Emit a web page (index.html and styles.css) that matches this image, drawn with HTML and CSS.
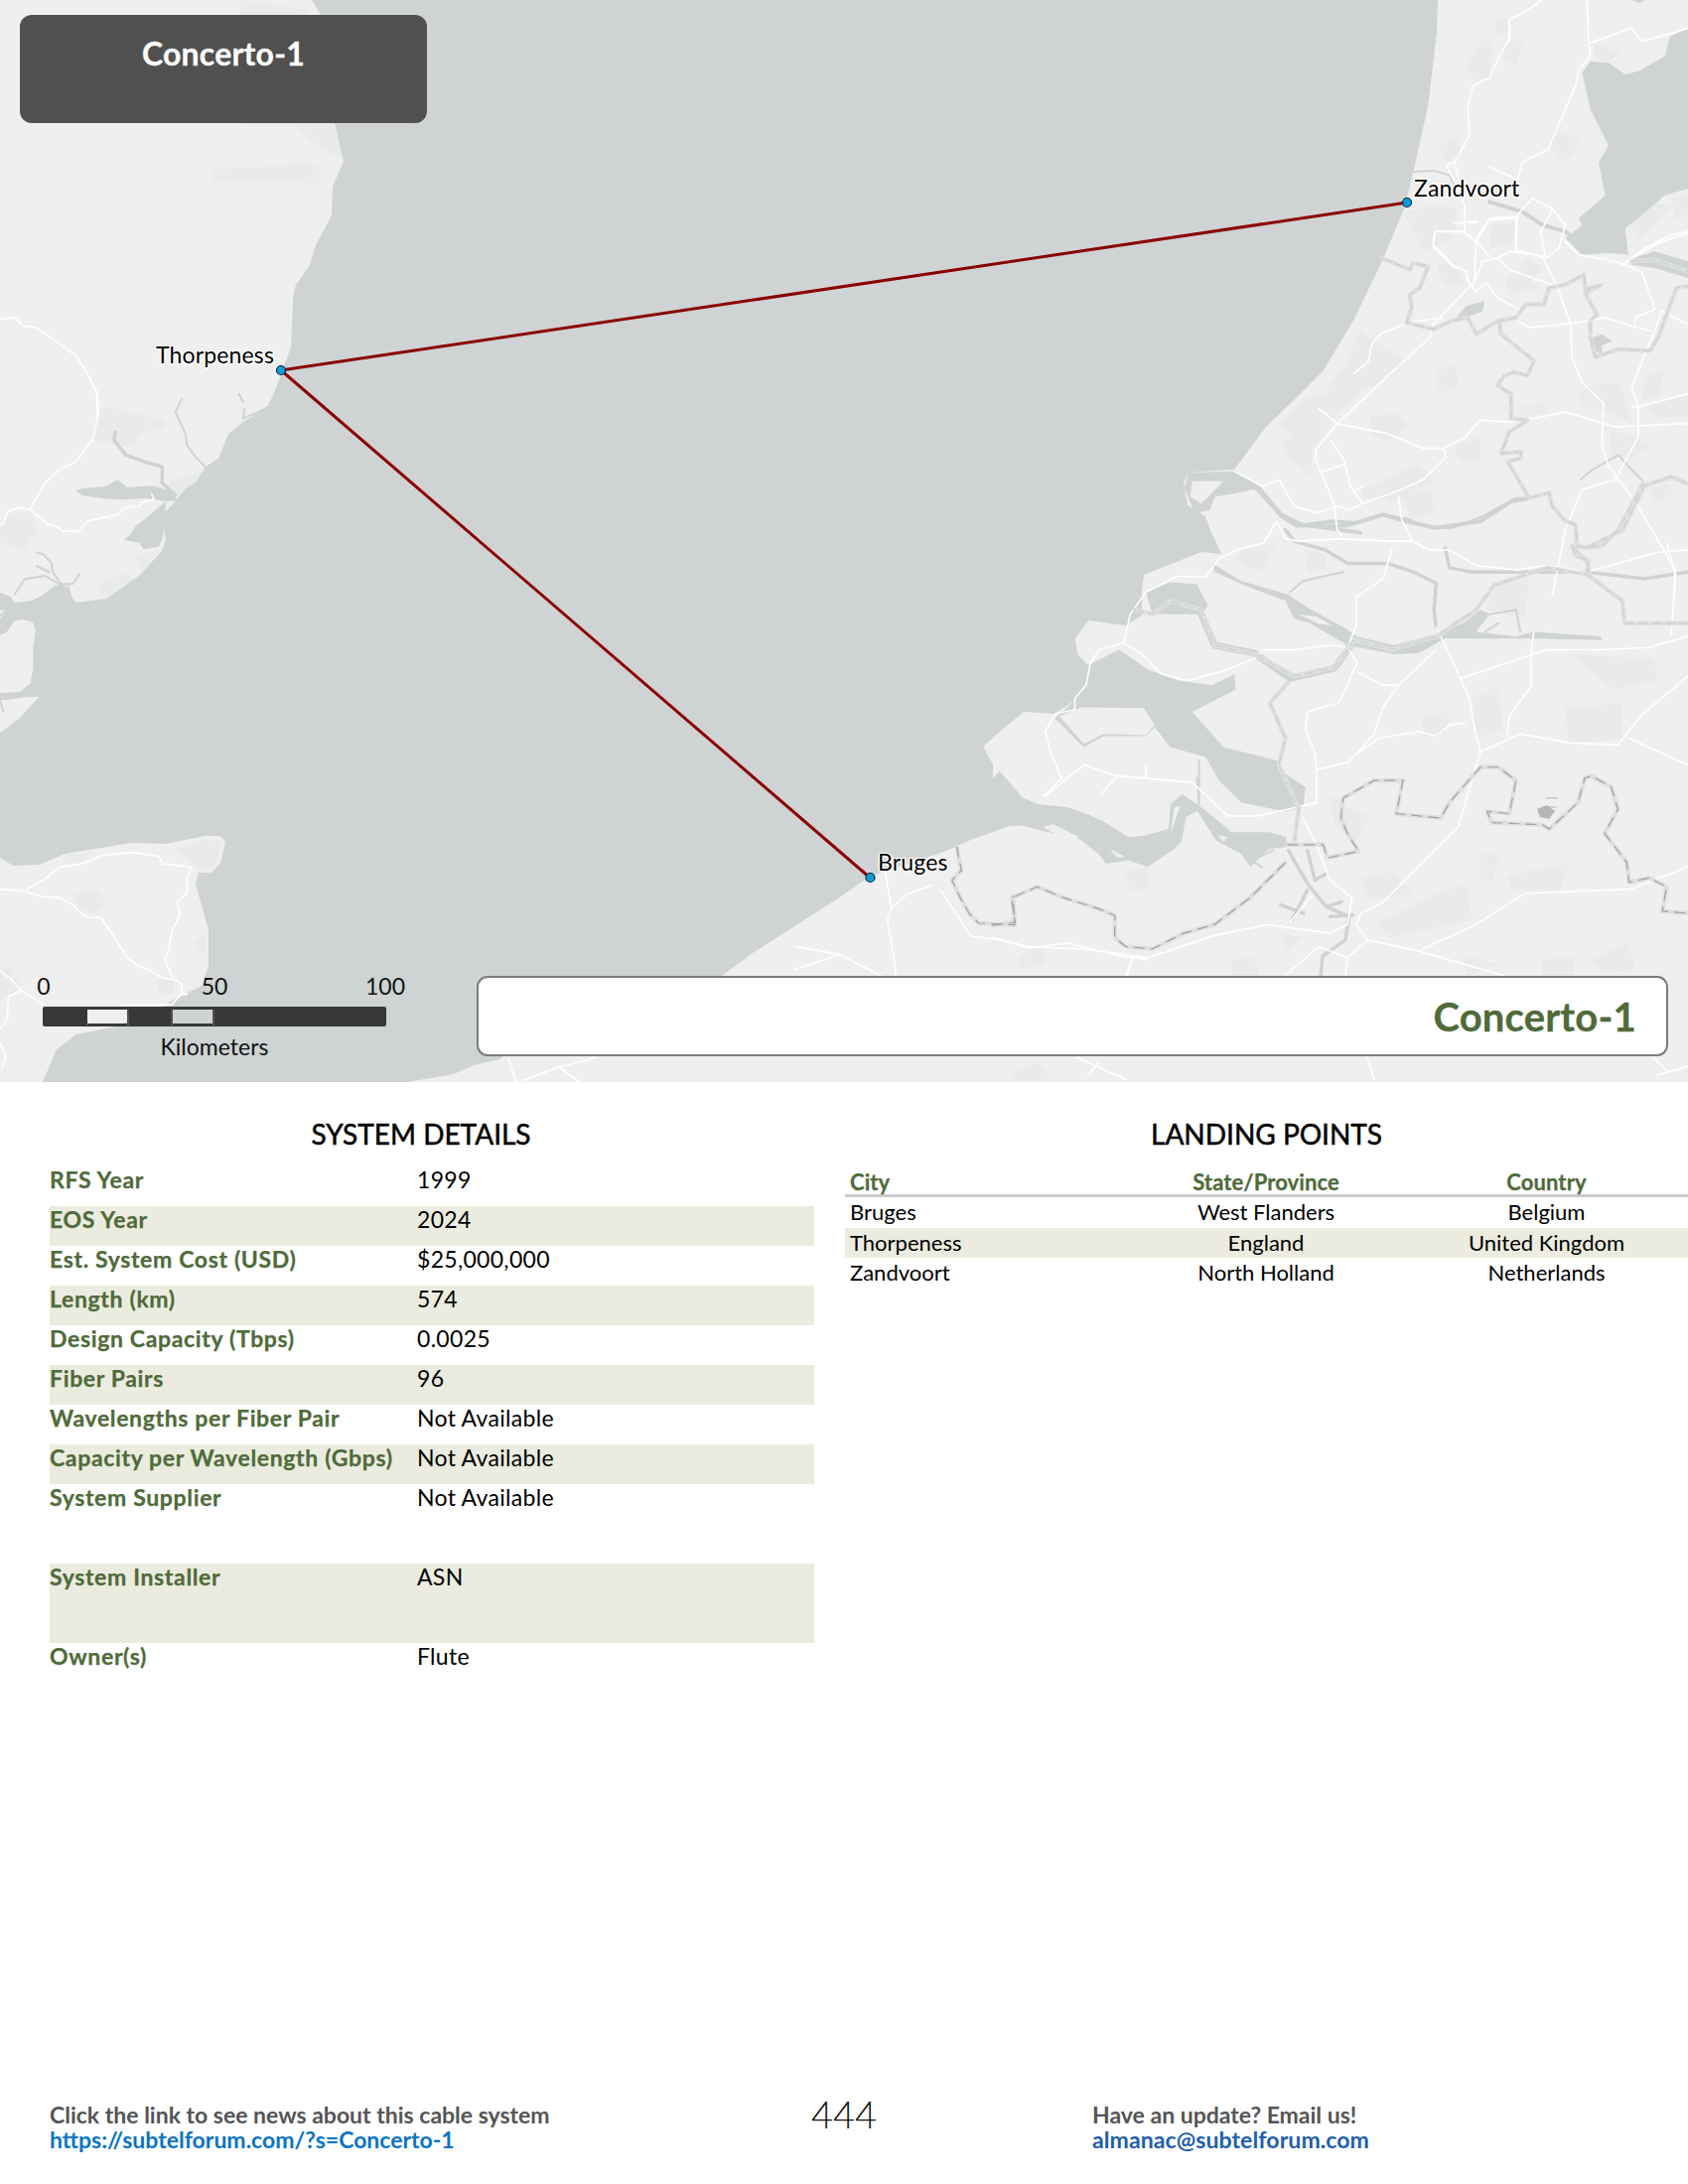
FILE: index.html
```html
<!DOCTYPE html>
<html lang="en">
<head>
<meta charset="utf-8">
<title>Concerto-1</title>
<link rel="stylesheet" href="styles.css">
</head>
<body>
<div class="page">
  <section class="map">
    <svg class="map-art" viewBox="0 0 1700 1090" width="1700" height="1090" aria-hidden="true">
      <defs>
        <g id="borders-major">
          <g transform="translate(1000 400) scale(.4464)">
            <path d="M0,1192 L50,1185 L42,1130 L100,1105 L160,1130 L240,1155 L275,1170 L275,1220 L300,1240 L360,1245 L430,1210 L500,1190 L580,1130 L660,1050"/>
            <path d="M665,1010 L745,1010 L755,1040 L825,1025 L800,985 L785,950 L790,905 L860,865 L925,865 L910,940 L1010,950 L1030,915 L1060,880 L1100,835 L1140,835 L1180,865 L1165,940 L1115,935 L1125,960 L1240,965 L1255,975 L1320,915 L1335,860 L1350,855 L1395,880 L1410,930 L1380,985 L1430,1050 L1435,1095 L1480,1085 L1520,1105 L1510,1160 L1568,1165"/>
          </g>
          <g transform="translate(800 780) scale(.3827 .3333)">
            <path d="M428,220 L432,250 L440,290 L415,320 L435,370 L460,420 L485,450 L580,455 L575,370"/>
          </g>
        </g>
        <g id="borders-minor">
          <g transform="translate(1000 400) scale(.4464)">
            <path d="M320,480 L360,490 L400,460 L470,480 L500,560 L590,580 L680,630 L770,610 L815,548 L900,570 L1000,540 L1090,480 L1130,425 L1250,385 L1340,400 L1420,460 L1425,510 L1568,510"/>
            <path d="M665,645 L625,690 L660,770 L645,830 L690,930 L680,1000"/>
            <path d="M1340,340 L1420,300 L1470,200 L1530,180 L1568,195"/>
            <path d="M1310,340 L1340,370 L1345,395"/>
          </g>
          <g transform="translate(1200 200) scale(.3333)">
            <path d="M575,180 L660,215 L670,195 L715,205 L690,270 L660,290 L665,330 L650,375 L730,395 L785,370 L835,360 L860,410 L925,370 L980,360 L1010,320 L1065,320 L1080,270 L1130,260 L1185,230 L1190,275 L1235,262 L1190,285 L1205,315 L1225,350 L1205,370 L1205,415 L1220,480 L1290,455 L1385,460 L1410,420 L1465,270 L1500,265"/>
            <path d="M930,375 L935,410 L1035,490 L1015,535 L975,525 L945,535 L925,565 L965,590 L965,665 L1015,670 L960,705 L935,770 L995,765 L995,785 L955,795 L1020,905 L1080,890 L1090,930 L1130,975 L1160,985 L1165,1050 L1195,1055 L1240,1050 L1290,1000 L1365,860"/>
            <path d="M1150,1050 L1160,1080 L1200,1095 L1195,1130"/>
            <path d="M1330,190 L1400,185 L1500,220"/>
          </g>
        </g>
      </defs>

      <rect class="land" width="1700" height="1090"/>

      <g class="urban">
        <g transform="translate(0 0) scale(.3827 .3333)">
          <path d="M560,510 L700,505 L800,490 L840,500 L840,555 L700,548 L560,548Z"/>
          <path d="M630,0 L700,10 L810,30 L860,140 L900,480 L820,430 L780,380 L640,380 L730,300 L640,200Z"/>
        </g>
        <g transform="translate(0 380) scale(.3333)">
          <path d="M300,95 L340,90 L410,110 L500,130 L500,150 L425,170 L400,210 L320,200 L280,190Z"/>
          <path d="M0,445 L30,410 L90,405 L115,460 L70,525 L0,500Z"/>
          <path d="M290,630 L370,590 L410,610 L320,665Z"/>
          <path d="M505,315 L610,285 L590,318 L540,365Z"/>
          <path d="M400,545 L480,520 L430,585Z"/>
        </g>
        <g transform="translate(0 780) scale(.3333)">
          <path d="M220,360 L290,350 L320,380 L290,420 L240,410Z"/>
          <path d="M470,620 L520,610 L530,660 L480,670Z"/>
          <path d="M590,500 L625,485 L625,530 L600,545Z"/>
          <path d="M520,230 L620,195 L670,205 L650,280 L600,290 L560,250Z"/>
          <path d="M200,240 L270,235 L260,262 L190,270Z"/>
          <path d="M0,600 L30,575 L60,640 L40,670 L0,680Z"/>
        </g>
        <g transform="translate(1300 0) scale(.3333)">
          <path d="M530,200 L580,120 L610,130 L600,235 L550,240Z"/>
          <path d="M640,180 L650,130 L710,115 L680,195Z"/>
          <path d="M620,60 L650,50 L660,100 L620,110Z"/>
          <path d="M780,440 L810,400 L880,420 L830,490Z"/>
          <path d="M915,130 L1000,160 L950,190 L920,180Z"/>
          <path d="M340,640 L480,620 L490,720 L400,760Z"/>
          <path d="M450,440 L510,410 L510,470 L465,490Z"/>
          <path d="M1020,680 L1100,610 L1150,620 L1060,720Z"/>
          <path d="M440,800 L500,790 L530,860 L460,860Z"/>
          <path d="M650,850 L720,780 L760,810 L700,880Z"/>
          <path d="M600,680 L690,670 L670,740 L600,750Z"/>
          <path d="M1150,600 L1200,590 L1200,650 L1160,660Z"/>
        </g>
        <g transform="translate(1200 200) scale(.3333)">
          <path d="M270,680 L330,610 L400,590 L460,510 L510,400 L550,430 L640,480 L620,530 L520,580 L440,650 L380,740 L330,770Z"/>
          <path d="M740,520 L800,505 L805,570 L740,590Z"/>
          <path d="M540,670 L620,645 L655,690 L590,735 L540,710Z"/>
          <path d="M790,760 L850,735 L880,780 L820,800Z"/>
          <path d="M520,870 L680,830 L705,860 L520,910Z"/>
          <path d="M640,900 L720,880 L740,950 L660,970Z"/>
          <path d="M990,630 L1060,615 L1070,650 L1000,660Z"/>
          <path d="M1160,590 L1230,560 L1300,560 L1330,680 L1250,640 L1180,630Z"/>
          <path d="M1260,700 L1320,710 L1390,750 L1320,790 L1270,770Z"/>
          <path d="M1370,620 L1500,590 L1500,660 L1400,660Z"/>
          <path d="M750,200 L800,190 L800,240 L770,260Z"/>
          <path d="M950,250 L1020,240 L1050,270 L960,290Z"/>
          <path d="M1380,880 L1440,860 L1460,890 L1400,920Z"/>
          <path d="M1370,540 L1430,520 L1410,600 L1360,610Z"/>
          <path d="M340,1060 L400,1070 L410,1120 L350,1130Z"/>
          <path d="M150,1090 L210,1070 L220,1130 L160,1110Z"/>
          <path d="M700,20 L800,30 L800,100 L720,130 L660,90Z"/>
        </g>
        <g transform="translate(1000 400) scale(.4464)">
          <path d="M850,45 L900,35 L930,70 L870,80Z"/>
          <path d="M1040,110 L1100,90 L1100,140 L1060,150Z"/>
          <path d="M830,210 L960,150 L1000,190 L900,240Z"/>
          <path d="M1080,680 L1140,650 L1150,750 L1090,770Z"/>
          <path d="M1290,700 L1420,690 L1420,770 L1300,780Z"/>
          <path d="M1300,580 L1490,590 L1500,640 L1400,660Z"/>
          <path d="M970,720 L1030,710 L1020,760 L970,765Z"/>
          <path d="M830,1085 L900,1070 L950,1120 L850,1135Z"/>
          <path d="M1000,1120 L1070,1100 L1080,1180 L900,1220 L860,1190Z"/>
          <path d="M1160,1080 L1300,1050 L1280,1110 L1170,1110Z"/>
          <path d="M1100,1030 L1140,1030 L1130,1090 L1100,1090Z"/>
          <path d="M60,1260 L110,1240 L120,1280 L60,1290Z"/>
          <path d="M300,1070 L350,1060 L350,1110 L310,1115Z"/>
          <path d="M540,1270 L590,1265 L600,1305 L540,1305Z"/>
          <path d="M650,1210 L700,1220 L660,1250Z"/>
          <path d="M1240,1270 L1310,1260 L1310,1305 L1240,1305Z"/>
          <path d="M1060,1260 L1140,1280 L1070,1305Z"/>
          <path d="M1350,1270 L1430,1230 L1450,1290 L1380,1300Z"/>
          <path d="M760,900 L850,950 L820,1000 L770,970Z"/>
          <path d="M40,1530 L100,1500 L130,1540 L50,1545Z"/>
          <path d="M650,100 L720,90 L720,180 L660,130Z"/>
          <path d="M560,340 L640,330 L610,395 L550,370Z"/>
          <path d="M1140,420 L1210,410 L1200,500 L1110,480Z"/>
          <path d="M350,630 L480,660 L430,680Z"/>
        </g>
      </g>

      <path class="water" d="M314,0 L323,15 L337,124 L346,163 L335,188 L334,217 L318,247 L312,267 L298,287 L295,300 L293,350 L283,377 L277,393 L270,410 L245,425 L230,437 L220,462 L207,470 L198,485 L187,492 L178,503 L163,520 L167,543 L163,555 L140,580 L107,603 L77,607 L73,603 L68,592 L62,588 L55,590 L42,600 L32,605 L15,607 L10,602 L0,597 L0,864 L13,872 L40,871 L65,860 L133,849 L167,850 L207,842 L222,842 L227,848 L222,870 L213,879 L200,879 L197,890 L210,937 L210,973 L203,993 L183,1003 L160,1015 L117,1034 L77,1042 L57,1057 L43,1090 L410,1090 L457,1082 L477,1073 L503,1067 L540,1040 L727,983 L758,960 L800,933 L844,905 L876,883 L953,857 L980,845 L1018,832 L1000,838 L1000,770 L990,752 L1000,743 L1031,717 L1062,719 L1085,704 L1096,670 L1085,659 L1083,643 L1096,625 L1134,630 L1150,620 L1150,594 L1152,579 L1210,556 L1230,558 L1219,534 L1214,520 L1196,509 L1192,487 L1196,476 L1243,473 L1275,430 L1303,403 L1333,373 L1363,323 L1392,263 L1415,208 L1427,157 L1438,107 L1447,33 L1448,0Z"/>

      <!-- England: islands and estuaries -->
      <g transform="translate(0 380) scale(.3333)">
        <path class="land" d="M0,780 L20,770 L45,735 L70,732 L100,740 L107,765 L100,820 L100,880 L92,925 L60,950 L0,955Z"/>
        <path class="land" d="M0,1075 L20,1060 L60,1030 L118,965 L65,968 L20,975 L0,975Z"/>
        <path class="land" d="M0,705 L22,703 L0,728Z"/>
        <path class="land" d="M45,672 L100,620 L165,630 L130,655 L95,672Z"/>
        <path class="water" d="M228,345 L250,335 L320,330 L355,310 L385,333 L460,328 L490,335 L530,350 L535,372 L500,375 L440,365 L370,370 L330,368 L250,358Z"/>
        <path class="water" d="M500,375 L455,415 L430,435 L410,450 L398,470 L375,492 L420,500 L435,520 L480,512 L490,490 L500,440Z"/>
        <path class="river w5" d="M348,165 L345,190 L380,235 L450,260 L490,270 L490,320 L530,355"/>
        <path class="river w3" d="M550,65 L530,105 L560,170 L565,205 L590,240 L620,270"/>
        <path class="river w3" d="M110,530 L130,535 L155,560 L160,590 L185,625 L220,625 L240,595"/>
        <path class="river w3" d="M110,570 L150,590 M75,610 L135,600 L180,625 M75,610 L45,655 M205,630 L215,670"/>
        <path class="river w3" d="M0,655 L30,665 L38,690 L0,720 M0,968 L90,955 M0,975 L10,1010"/>
        <path class="river w3" d="M722,50 L735,75 M738,95 L735,125 L770,110 L810,90 L840,40"/>
      </g>

      <!-- Low Countries: inland water -->
      <g transform="translate(800 780) scale(.3827 .3333)">
        <path class="water" d="M540,-10 L600,70 L640,90 L720,100 L770,120 L810,140 L880,190 L920,185 L985,165 L990,90 L1020,60 L1060,90 L1100,125 L1150,175 L1250,175 L1295,190 L1295,220 L1250,225 L1200,280 L1175,240 L1110,200 L1060,110 L1030,130 L1020,200 L1000,225 L930,280 L880,260 L820,270 L800,240 L750,195 L650,170 L600,155 L570,155 L520,175 L400,180Z"/>
        <path class="land" d="M655,160 L680,150 L750,190 L720,200Z"/>
        <path class="land" d="M830,225 L870,250 L850,252Z"/>
        <path class="land" d="M1000,100 L1015,95 L990,180Z"/>
        <path class="land" d="M1115,185 L1140,190 L1130,205Z"/>
        <path class="river w5" d="M1300,230 L1350,330 L1400,400 L1460,430 L1450,500 L1390,550 L1385,610"/>
        <path class="river w5" d="M1350,230 L1370,320 M1280,395 L1340,420 M1310,440 L1350,350 M1370,320 L1400,300 M1400,400 L1440,385 M1410,430 L1470,425"/>
        <path class="river w3" d="M1060,10 L1065,90 M1180,240 L1230,280 M1205,260 L1260,230"/>
      </g>
      <g transform="translate(1000 400) scale(.4464)">
        <path class="water" d="M190,680 L215,605 L285,570 L350,615 L420,640 L495,650 L545,625 L548,660 L450,710 L520,790 L640,820 L660,850 L705,880 L700,925 L660,935 L560,915 L510,865 L480,812 L400,790 L365,745 L345,765 L250,765 L205,790 L140,725Z"/>
        <path class="land" d="M150,720 L200,700 L340,702 L365,740 L345,763 L250,760 L205,783Z"/>
        <path class="water" d="M495,375 L560,415 L665,445 L710,475 L800,525 L820,540 L905,560 L1000,535 L1060,510 L1100,480 L1120,490 L1090,530 L1180,540 L1220,530 L1370,540 L1375,548 L1220,545 L1100,545 L1020,545 L960,578 L905,580 L800,560 L715,510 L680,500 L660,460 L580,430 L500,395Z"/>
        <path class="land" d="M690,490 L730,495 L765,515 L735,512Z"/>
        <path class="water" d="M345,440 L400,418 L460,422 L485,470 L470,490 L400,490 L360,490Z"/>
        <path class="river w7" d="M470,490 L500,560 L590,578 L670,635 L770,612 L815,550"/>
        <path class="river w6" d="M545,170 L600,205 L650,265 L700,290 L800,290 L880,265 L930,280 L1000,295 L1100,280 L1170,235 L1210,228"/>
        <path class="river w5" d="M660,300 L680,325 L750,345 L800,375 L890,375 L950,395 L1000,420 L995,480 L1000,520"/>
        <path class="river w3" d="M670,440 L700,415 L790,395"/>
        <path class="river w5" d="M1020,340 L1030,385 L1080,395 L1250,395 L1340,395 L1470,410 L1568,395"/>
        <path class="river w3" d="M1120,490 L1180,480 L1190,530 M1140,510 L1110,530"/>
        <path class="river w3" d="M465,820 L465,910"/>
        <path class="river w3" d="M1250,905 L1272,905 M1240,925 L1270,925"/>
        <path class="water" d="M440,170 L545,168 L600,205 L560,215 L500,225 L490,255 L455,262 L432,205Z"/>
        <path class="land" d="M450,190 L520,190 L470,240 L445,225Z"/>
      </g>
      <g transform="translate(1200 200) scale(.3333)">
        <path class="water" d="M800,360 L830,325 L885,310 L880,340 L830,360Z"/>
        <path class="water" d="M1210,420 L1240,410 L1270,430 L1240,445 L1240,470 L1215,460Z"/>
        <path class="river w3" d="M645,965 L720,995 L790,995 L880,960 L980,905 L1020,905"/>
        <path class="river w3" d="M1175,850 L1210,820 L1290,775 L1330,820 L1360,850"/>
        <path class="river w5" d="M130,830 L200,880 L270,960 L320,990 L420,975 L500,980 L580,955 L640,970"/>
        <path class="river w6" d="M330,985 L440,1000 L510,1010"/>
      </g>
      <g transform="translate(1300 0) scale(.3333)">
        <path class="water" d="M880,220 L905,185 L960,190 L1010,225 L1050,215 L1130,170 L1145,110 L1200,85 L1200,570 L1130,590 L1060,650 L1010,690 L1020,770 L960,765 L880,770 L830,720 L880,680 L870,660 L950,590 L930,490 L960,440 L905,330Z"/>
        <path class="water" d="M1030,0 L1070,0 L1055,10Z"/>
        <path class="water" d="M1030,780 L1100,760 L1200,790 L1200,840 L1100,810 L1030,800Z"/>
        <path class="river w6" d="M600,610 L700,640 L760,680 L830,700 L880,745"/>
        <path class="river w3" d="M370,520 L430,515 L480,530 L500,570"/>
      </g>

      <!-- Roads -->
      <g class="roads">
        <g transform="translate(0 0) scale(.3827 .3333)">
          <path d="M0,965 L40,960 L60,985 L95,990 L140,1025 L200,1075 L230,1130 L255,1190 L255,1260"/>
        </g>
        <g transform="translate(0 380) scale(.3333)">
          <path d="M270,0 L295,50 L298,110 L280,190 L240,240 L230,255 L180,280 L135,320 L90,400 L60,393 L25,405 L10,440 L0,450"/>
          <path d="M90,400 L145,445 L170,450 L190,465 L235,467 L265,435 L355,415 L375,397 L420,390 L430,378 L465,370 L458,352"/>
        </g>
        <g transform="translate(0 780) scale(.3333)">
          <path d="M0,348 L40,350 L75,355 L130,370 L180,372 L220,395 L260,432 L305,433 L330,470 L385,555 L420,580 L450,590 L490,615 L530,622 L550,635 L548,665 L520,695 L475,698 L370,698"/>
          <path d="M80,348 L145,310 L180,280 L240,272 L310,245 L400,236 L480,248 L490,270 L578,280 L565,320 L565,360 L535,385 L545,425 L520,470 L510,530 L498,560 L522,615"/>
          <path d="M548,665 L565,665"/>
          <path d="M0,595 L35,620 L60,650 L130,695 M60,655 L25,672 L22,740 L0,770 M0,810 L18,850 L5,890"/>
        </g>
        <g transform="translate(1300 0) scale(.3333)">
          <path d="M760,0 L710,35 L660,60 L660,120 L630,170 L600,235 L550,260 L535,320 L540,410 L495,490 L470,500 L500,560 L525,620 L525,700 L560,730 L600,775"/>
          <path d="M495,490 L520,600"/>
          <path d="M895,0 L900,130 L905,170 L870,210 L860,260 L790,420 L780,450 L700,490 L680,560 L690,600"/>
          <path d="M905,130 L1030,85 L1060,125 L1170,95 L1200,85"/>
          <path d="M600,505 L680,540"/>
          <path d="M1000,800 L1110,735 L1200,705"/>
          <path d="M435,700 L525,700 M495,675 L565,672 M435,700 L430,740 L490,800 L530,820 L540,860"/>
          <path d="M685,650 L730,600 L790,630 L830,680 L810,750 L770,780 L755,700 L790,635 M685,650 L680,760 M600,660 L680,655 M600,660 L560,720"/>
        </g>
        <g transform="translate(1200 200) scale(.3333)">
          <path d="M855,250 L860,130 L820,100 L735,100 L730,145 L790,205 L830,220 L835,250 L860,280 L890,255 L925,300 L990,335"/>
          <path d="M860,130 L900,65 L980,60 L980,155 L1060,175 M820,70 L865,70"/>
          <path d="M880,190 L925,180 L960,160 L1040,170 L1060,180 M925,180 L960,215 L1060,250 L1105,265"/>
          <path d="M1060,175 L1105,265 L1145,380 L1150,480 L1180,555 L1245,620 L1240,740 L1260,810 L1330,900 L1420,1050 L1460,1120 L1460,1200"/>
          <path d="M880,190 L855,250 L730,380 L720,420 L600,530 L440,680 L375,760 L375,790 L430,920 L440,1000 L455,1020"/>
          <path d="M640,380 L570,410 L545,440 L535,490 L490,530 M650,375 L760,360"/>
          <path d="M385,635 L440,680 L590,710 L700,755 L760,755 L830,720 L870,670 L960,675 L1030,665 L1130,645 L1280,690 L1500,680"/>
          <path d="M760,755 L770,780 L700,850 L620,885 L520,920 L480,940 L440,930 L380,950 L310,930 L265,850 L215,870 L130,825"/>
          <path d="M420,730 L460,790 L480,870 L515,920 M395,825 L460,805 M490,885 L520,870"/>
          <path d="M625,900 L635,970 L665,1030"/>
          <path d="M1330,630 L1350,630 L1330,570 L1370,470 L1400,400 L1420,340"/>
          <path d="M985,370 L1020,390 L1140,378 L1200,370 L1250,360 L1330,385 L1390,400"/>
          <path d="M1180,880 L1280,850 L1350,720 L1350,630 L1500,590 M1180,880 L1130,1000 L1090,1200"/>
          <path d="M1340,380 L1340,360 L1400,335 L1360,220 L1280,190 L1170,170 L1130,130 M1420,340 L1500,380 M1300,200 L1370,150 L1450,110 L1500,100"/>
        </g>
        <g transform="translate(1000 400) scale(.4464)">
          <path d="M640,280 L660,320 L690,325 L780,320 L900,325 L945,325 L985,345 L1030,345 L1090,380 L1180,390 L1250,380 L1340,395 L1500,350 L1568,345"/>
          <path d="M480,405 L510,365 L550,345 L610,330 L640,280"/>
          <path d="M480,405 L415,405 L345,440 L310,490 L295,555 L240,570 L220,600 L210,650 L185,680 L185,705 L140,715 L118,755 L130,800 L155,860 L115,900"/>
          <path d="M295,555 L330,575 L380,625 L440,640 L530,615 L590,590 L610,570 L680,570 L760,560 L800,565"/>
          <path d="M800,565 L820,515 L820,450 L880,410 L900,345"/>
          <path d="M800,565 L822,600 L780,690 L710,710 L705,750 L725,800 L730,840 L800,825 L820,805 L870,770 L960,755 L1000,765 L1030,740 L1065,735"/>
          <path d="M822,620 L880,650 L915,650 L880,700 L860,760 L820,805 M915,650 L1000,570"/>
          <path d="M1000,520 L1020,560 L1075,680 L1085,740 L1100,800 L1070,900 L1050,970 L960,1060 L880,1140 L830,1165 L820,1190 L845,1225 L800,1265 L795,1305"/>
          <path d="M1055,635 L1130,610 L1250,570 L1370,570 L1480,565 L1568,540"/>
          <path d="M1220,530 L1213,590 L1215,650 L1165,720 L1160,765"/>
          <path d="M1100,800 L1190,760 L1300,780 L1410,785 L1460,720 L1568,630"/>
          <path d="M1435,770 L1568,830"/>
          <path d="M1520,330 L1540,400 L1530,540"/>
          <path d="M0,1220 L80,1240 L200,1245 L350,1265 L500,1215 L620,1190 L760,1210 L800,1190 L810,1130 L760,1090 L730,1010 L700,950"/>
          <path d="M118,900 L205,830 L280,855 L345,860 L450,870 L530,945 L600,945 L730,915 L730,840"/>
          <path d="M280,855 L245,895 M345,860 L345,830 M670,1185 L720,1125"/>
          <path d="M845,1225 L960,1250 L1150,1305 M970,1245 L1090,1190 L1200,1120 L1440,1110 L1568,1060"/>
          <path d="M800,1265 L735,1240 L660,1305 M315,1265 L300,1305"/>
          <path d="M845,1490 L860,1540 M1490,1490 L1520,1520 M1500,1530 L1568,1510 M190,1490 L300,1540 M240,1500 L215,1530"/>
        </g>
        <g transform="translate(800 780) scale(.3827 .3333)">
          <path d="M240,300 L255,405 L245,440 L260,540 L268,610 M255,405 L300,360 L365,335 M385,350 L420,410 L465,490 L540,500 L620,525 L720,510 L860,550 L930,560"/>
          <path d="M0,520 L120,545 L230,610 M120,545 L0,590 M890,555 L875,610"/>
        </g>
        <g transform="translate(460 960) scale(.3333)">
          <path d="M155,320 L180,390 M200,385 L310,345 L420,315 M310,345 L370,390"/>
        </g>
      </g>

      <!-- Administrative borders -->
      <g class="lines">
        <use href="#borders-minor" class="halo"/>
        <use href="#borders-major" class="halo"/>
        <use href="#borders-minor" class="dash-minor"/>
        <use href="#borders-major" class="dash-major"/>
      </g>
      <path class="ship" d="M1548,815 l10,-4 l8,6 l-6,8 l-9,-2Z"/>

      <!-- Cable -->
      <path class="cable" d="M1417,204 L283,373 L876,884"/>
      <circle class="landing" cx="283" cy="373" r="4.5"/>
      <circle class="landing" cx="1417" cy="204" r="4.5"/>
      <circle class="landing" cx="876.5" cy="884" r="4.5"/>

      <!-- Scale bar -->
      <path class="scale-bar" fill-rule="evenodd" d="M45,1014 H387 Q389,1014 389,1016 V1032 Q389,1034 387,1034 H45 Q43,1034 43,1032 V1016 Q43,1014 45,1014Z M88,1017 V1031 H128 V1017Z M174,1017 V1031 H214 V1017Z"/>
      <path class="scale-tick" d="M88,1031 V1034 M129,1017 V1034 M173,1017 V1034 M215,1017 V1034"/>
    </svg>

    <span class="place place-thorpeness">Thorpeness</span>
    <span class="place place-zandvoort">Zandvoort</span>
    <span class="place place-bruges">Bruges</span>

    <span class="scale-label scale-0">0</span>
    <span class="scale-label scale-50">50</span>
    <span class="scale-label scale-100">100</span>
    <span class="scale-label scale-unit">Kilometers</span>

    <div class="title-dark">Concerto-1</div>
    <div class="title-light">Concerto-1</div>
  </section>

  <main class="details">
    <section class="system">
      <h2 class="heading heading-system">SYSTEM DETAILS</h2>
      <div class="spec">
        <div class="spec-row"><div class="spec-key">RFS Year</div><div>1999</div></div>
        <div class="spec-row shade"><div class="spec-key">EOS Year</div><div>2024</div></div>
        <div class="spec-row"><div class="spec-key">Est. System Cost (USD)</div><div>$25,000,000</div></div>
        <div class="spec-row shade"><div class="spec-key">Length (km)</div><div>574</div></div>
        <div class="spec-row"><div class="spec-key">Design Capacity (Tbps)</div><div>0.0025</div></div>
        <div class="spec-row shade"><div class="spec-key">Fiber Pairs</div><div>96</div></div>
        <div class="spec-row"><div class="spec-key">Wavelengths per Fiber Pair</div><div>Not Available</div></div>
        <div class="spec-row shade"><div class="spec-key">Capacity per Wavelength (Gbps)</div><div>Not Available</div></div>
        <div class="spec-row tall"><div class="spec-key">System Supplier</div><div>Not Available</div></div>
        <div class="spec-row shade tall"><div class="spec-key">System Installer</div><div>ASN</div></div>
        <div class="spec-row"><div class="spec-key">Owner(s)</div><div>Flute</div></div>
      </div>
    </section>
    <section class="landing-points">
      <h2 class="heading">LANDING POINTS</h2>
      <div class="lp">
        <div class="lp-row lp-head"><div class="lp-city">City</div><div>State/Province</div><div>Country</div></div>
        <div class="lp-row"><div class="lp-city">Bruges</div><div>West Flanders</div><div>Belgium</div></div>
        <div class="lp-row shade"><div class="lp-city">Thorpeness</div><div>England</div><div>United Kingdom</div></div>
        <div class="lp-row"><div class="lp-city">Zandvoort</div><div>North Holland</div><div>Netherlands</div></div>
      </div>
    </section>
  </main>

  <footer class="foot">
    <div class="foot-left">
      <div class="foot-note">Click the link to see news about this cable system</div>
      <a class="foot-link" href="#">https://subtelforum.com/?s=Concerto-1</a>
    </div>
    <div class="foot-page">444</div>
    <div class="foot-right">
      <div class="foot-note">Have an update? Email us!</div>
      <a class="foot-mail" href="#">almanac@subtelforum.com</a>
    </div>
  </footer>
</div>
</body>
</html>
```

FILE: styles.css
```css
* { box-sizing: border-box; }
html, body { margin: 0; padding: 0; background: #fff; }
body { font-family: Lato, "Noto Sans", sans-serif; color: #000; }

.page { width: 1700px; height: 2200px; display: flex; flex-direction: column; }

/* Map canvas */
.map { position: relative; width: 1700px; height: 1090px; overflow: hidden; flex: none; }
.map-art { display: block; }
.map-art path { vector-effect: non-scaling-stroke; stroke-linejoin: round; stroke-linecap: round; }

.land { fill: #efefef; }
.water { fill: #cfd3d4; }
.urban path { fill: #e9ebea; }
.river { fill: none; stroke: #cfd3d4; }
.w3 { stroke-width: 2; }
.w5 { stroke-width: 3.5; }
.w6 { stroke-width: 4; }
.w7 { stroke-width: 7; }
.roads path { fill: none; stroke: #fff; stroke-width: 1.6; }
.lines { fill: none; }
.halo { stroke: #dedfdf; stroke-width: 4.5; }
.dash-minor { stroke: #cbcdcd; stroke-width: 1; stroke-dasharray: 9 5; }
.dash-major { stroke: #9fa1a1; stroke-width: 1.2; stroke-dasharray: 10 7; }
.ship { fill: #b5b7b7; }
.cable { fill: none; stroke: #8b0000; stroke-width: 3; }
.landing { fill: #0b9ddb; stroke: #0a2a3a; stroke-width: 1.2; }
.scale-bar { fill: #383838; }
.scale-tick { fill: none; stroke: #6e6e6e; stroke-width: 1; }

.place {
  position: absolute;
  font-size: 23px;
  letter-spacing: .15px;
  line-height: 26px;
  color: #000;
  white-space: nowrap;
  text-shadow: -1.5px 0 #fff, 1.5px 0 #fff, 0 -1.5px #fff, 0 1.5px #fff, -1px -1px #fff, 1px 1px #fff, -1px 1px #fff, 1px -1px #fff;
}
.place-thorpeness { left: 157px; top: 344px; }
.place-zandvoort { left: 1424px; top: 176px; }
.place-bruges { left: 884px; top: 855px; }

.scale-label {
  position: absolute;
  width: 120px;
  text-align: center;
  font-size: 23px;
  line-height: 26px;
  color: #111;
}
.scale-0 { left: -16px; top: 980px; }
.scale-50 { left: 156px; top: 980px; }
.scale-100 { left: 328px; top: 980px; }
.scale-unit { left: 156px; top: 1041px; }

.title-dark {
  position: absolute;
  left: 20px;
  top: 15px;
  width: 410px;
  height: 109px;
  padding-top: 19px;
  background: #505050;
  border-radius: 12px;
  color: #fff;
  text-align: center;
  font-size: 32px;
  letter-spacing: .2px;
  line-height: 40px;
  font-weight: 700;
  -webkit-text-stroke: .3px #fff;
}
.title-light {
  position: absolute;
  left: 480px;
  top: 983px;
  width: 1200px;
  height: 81px;
  padding: 0 30px 0 0;
  background: #fff;
  border: 2px solid #7c7c7c;
  border-radius: 11px;
  color: #4f6b3a;
  text-align: right;
  font-size: 40px;
  letter-spacing: .2px;
  line-height: 78px;
  font-weight: 700;
  -webkit-text-stroke: .3px #4f6b3a;
}

/* Tables */
.details {
  display: grid;
  grid-template-columns: 770px 849px;
  column-gap: 31px;
  padding: 36px 0 0 50px;
  flex: 1 1 auto;
}
.heading {
  margin: 0;
  height: 49px;
  text-align: center;
  font-size: 28px;
  line-height: 32px;
  font-weight: 400;
  -webkit-text-stroke: .5px #000;
}
.heading-system { padding-right: 22px; }
.shade { background: #ebecdf; }
.spec-row {
  display: grid;
  grid-template-columns: 370px 1fr;
  height: 40px;
  font-size: 23px;
  letter-spacing: .3px;
  line-height: 26px;
}
.spec-row.tall { height: 80px; }
.spec-key {
  color: #4f6b3a;
  font-weight: 700;
  letter-spacing: .65px;
  white-space: nowrap;
  -webkit-text-stroke: .25px #4f6b3a;
}

.lp { margin-top: -1px; }
.lp-row {
  display: grid;
  grid-template-columns: 284px 280px 285px;
  height: 30.7px;
  font-size: 22px;
  line-height: 30px;
  text-align: center;
}
.lp-head {
  height: 32px;
  border-bottom: 3px solid #cbcbcb;
  color: #4f6b3a;
  font-weight: 700;
  line-height: 34px;
  letter-spacing: .1px;
  -webkit-text-stroke: .25px #4f6b3a;
}
.lp-city { text-align: left; padding-left: 5px; }

/* Footer */
.foot {
  display: grid;
  grid-template-columns: 1050px 1fr;
  position: relative;
  height: 82px;
  padding-left: 50px;
  flex: none;
  font-size: 23px;
  line-height: 25px;
}
.foot-left { grid-column: 1; }
.foot-right { grid-column: 2; }
.foot-note { color: #555; font-weight: 700; }
.foot-link { color: #0a74c4; font-weight: 700; text-decoration: none; }
.foot-mail { color: #205fae; font-weight: 700; text-decoration: none; letter-spacing: .1px; }
.foot-page {
  position: absolute;
  left: 750px;
  top: -11px;
  width: 200px;
  text-align: center;
  font-size: 38px;
  line-height: 44px;
  color: #111;
  font-weight: 300;
}
```
